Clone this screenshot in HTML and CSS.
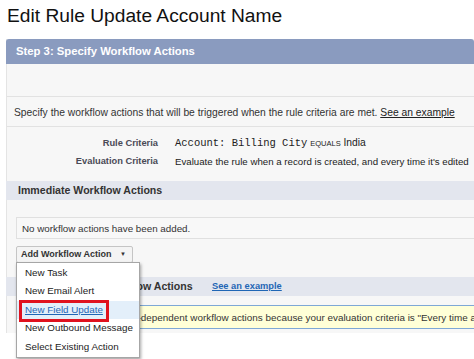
FILE: index.html
```html
<!DOCTYPE html>
<html>
<head>
<meta charset="utf-8">
<link rel="stylesheet" href="styles.css">
</head>
<body>
<h1 class="title">Edit Rule Update Account Name</h1>
<div class="panel">
  <div class="panel-head">Step 3: Specify Workflow Actions</div>
  <div class="blank"></div>
  <div class="intro">Specify the workflow actions that will be triggered when the rule criteria are met. <a class="plain-link">See an example</a></div>
  <div class="criteria">
    <div class="crow"><span class="clabel">Rule Criteria</span><span class="cval"><span class="mono">Account: Billing City</span> <span class="op">EQUALS</span> India</span></div>
    <div class="crow"><span class="clabel">Evaluation Criteria</span><span class="cval eval">Evaluate the rule when a record is created, and every time it's edited</span></div>
  </div>
  <div class="band">Immediate Workflow Actions</div>
  <div class="sect">
    <div class="empty-box">No workflow actions have been added.</div>
    <div class="btn-wrap">
      <div class="btn">Add Workflow Action <span class="caret">&#9660;</span></div>
      <ul class="menu">
        <li>New Task</li>
        <li>New Email Alert</li>
        <li class="active"><a>New Field Update</a><span class="hl"></span></li>
        <li>New Outbound Message</li>
        <li>Select Existing Action</li>
      </ul>
    </div>
  </div>
  <div class="band band2"><span class="band2-title">Time-Dependent Workflow Actions</span><a class="blue-link">See an example</a></div>
  <div class="sect2">
    <div class="notice">You can't add time-dependent workflow actions because your evaluation criteria is "Every time a record is created or edited".</div>
  </div>
</div>
</body>
</html>
```

FILE: styles.css
```css
html, body { margin: 0; padding: 0; background: #fff; }
body { font-family: "Liberation Sans", Arial, sans-serif; color: #222; overflow: hidden; width: 474px; height: 359px; }
.title { margin: 0; padding: 4px 0 0 7px; height: 39px; box-sizing: border-box; font-weight: normal; font-size: 19.2px; line-height: 24px; color: #111; }
.panel { margin-left: 6px; width: 468px; background: #f7f7f7; border-left: 1px solid #e4e4e4; height: 294px; box-sizing: border-box; }
.panel-head { height: 25px; background: #8a9bbf; color: #fff; font-weight: bold; font-size: 11.3px; line-height: 25px; padding-left: 10px; border-radius: 3px 3px 0 0; margin-left: -1px; white-space: nowrap; }
.blank { height: 32px; border-bottom: 1px solid #e2e2e2; }
.intro { height: 29px; line-height: 31px; font-size: 10.3px; padding-left: 7px; color: #333; border-bottom: 1px solid #e2e2e2; white-space: nowrap; }
.plain-link { color: #222; text-decoration: underline; }
.criteria { padding-top: 7px; height: 47px; }
.crow { display: flex; height: 18px; align-items: center; white-space: nowrap; }
.clabel { flex-shrink: 0; width: 151px; text-align: right; font-size: 9.3px; font-weight: bold; color: #4a4a56; padding-right: 17px; }
.cval { font-size: 10.3px; color: #222; }
.cval.eval { font-size: 9.7px; }
.mono { font-family: "Liberation Mono", "Courier New", monospace; font-size: 10.5px; }
.op { font-size: 7.5px; }
.band { height: 19px; line-height: 19px; background: #e3e6ee; font-weight: bold; font-size: 10.6px; color: #333; padding-left: 12px; margin-left: -1px; white-space: nowrap; }
.sect { padding: 17px 0 0 9px; height: 60px; }
.empty-box { height: 20px; line-height: 21px; font-size: 9.8px; padding-left: 5px; background: #f8f8f8; border-top: 1px solid #e0e0e0; border-bottom: 1px solid #e0e0e0; border-left: 1px solid #e0e0e0; color: #333; white-space: nowrap; }
.btn-wrap { position: relative; margin-top: 7px; display: flex; }
.btn { height: 15px; line-height: 15px; padding: 0 6px 0 4px; font-size: 9px; font-weight: bold; color: #333; background: #f4f4f4; border: 1px solid #c5c5c5; border-radius: 2px; white-space: nowrap; }
.caret { font-size: 6px; margin-left: 6px; vertical-align: 1px; }
.menu { position: absolute; left: 0; top: 16px; width: 122px; margin: 0; padding: 1px 0; list-style: none; background: #fff; border: 1px solid #a6a6a6; box-shadow: 1px 2px 3px rgba(0,0,0,0.35); z-index: 5; }
.menu li { position: relative; height: 18.4px; line-height: 18px; font-size: 9.8px; padding-left: 8px; color: #222; white-space: nowrap; }
.menu li.active { background: #e3effa; }
.menu li.active a { color: #1f66b5; text-decoration: underline; }
.hl { position: absolute; left: 2px; top: -1px; width: 84px; height: 16px; border: 3px solid #e0121e; }
.band2 { display: flex; }
.band2-title { width: 194px; flex-shrink: 0; }
.blue-link { color: #1f66b5; text-decoration: underline; font-weight: bold; font-size: 9.3px; }
.sect2 { padding: 9px 0 0 9px; height: 30px; }
.notice { height: 22px; line-height: 23px; font-size: 9.9px; background: #ffffd7; border: 1px solid #7ea8d6; border-right: none; padding-left: 40px; white-space: nowrap; color: #333; }
```
